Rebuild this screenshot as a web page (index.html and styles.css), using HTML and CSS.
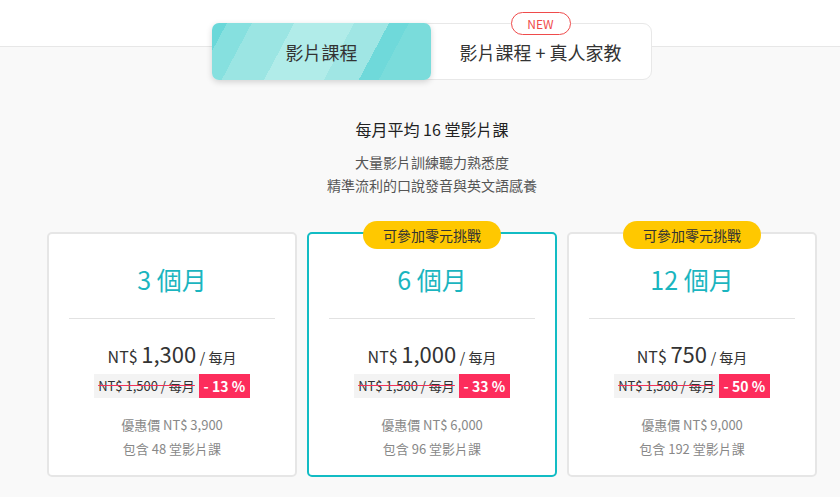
FILE: index.html
```html
<!DOCTYPE html>
<html lang="zh-Hant">
<head>
<meta charset="utf-8">
<link rel="stylesheet" href="styles.css">
</head>
<body>
<div class="page">
  <div class="tabs">
    <div class="tab tab-active">影片課程</div>
    <div class="tab tab-plain">
      <span class="badge-new">NEW</span>
      影片課程 + 真人家教
    </div>
  </div>

  <div class="intro">
    <h2 class="intro-title">每月平均 16 堂影片課</h2>
    <p class="intro-text">大量影片訓練聽力熟悉度<br>精準流利的口說發音與英文語感養</p>
  </div>

  <div class="plans">
    <div class="card">
      <div class="card-title">3 個月</div>
      <div class="divider"></div>
      <div class="price"><span class="cur">NT$</span> <span class="amt">1,300</span> <span class="per">/ 每月</span></div>
      <div class="deal"><span class="old">NT$ 1,500 / 每月</span><span class="off">- 13 %</span></div>
      <div class="info">優惠價 NT$ 3,900</div>
      <div class="info">包含 48 堂影片課</div>
    </div>
    <div class="card card-featured">
      <span class="badge-yellow">可參加零元挑戰</span>
      <div class="card-title">6 個月</div>
      <div class="divider"></div>
      <div class="price"><span class="cur">NT$</span> <span class="amt">1,000</span> <span class="per">/ 每月</span></div>
      <div class="deal"><span class="old">NT$ 1,500 / 每月</span><span class="off">- 33 %</span></div>
      <div class="info">優惠價 NT$ 6,000</div>
      <div class="info">包含 96 堂影片課</div>
    </div>
    <div class="card">
      <span class="badge-yellow">可參加零元挑戰</span>
      <div class="card-title">12 個月</div>
      <div class="divider"></div>
      <div class="price"><span class="cur">NT$</span> <span class="amt">750</span> <span class="per">/ 每月</span></div>
      <div class="deal"><span class="old">NT$ 1,500 / 每月</span><span class="off">- 50 %</span></div>
      <div class="info">優惠價 NT$ 9,000</div>
      <div class="info">包含 192 堂影片課</div>
    </div>
  </div>
</div>
</body>
</html>
```

FILE: styles.css
```css
* { box-sizing: border-box; }
html, body { margin: 0; padding: 0; }
body {
  font-family: "Noto Sans CJK TC", "Noto Sans", sans-serif;
  color: #333;
  background: linear-gradient(#ffffff 0, #ffffff 46px, #e7e7e7 46px, #e7e7e7 47px, #f9f9f9 47px) no-repeat;
  background-color: #f9f9f9;
  min-height: 497px;
}
.page {
  width: 770px;
  margin-left: 47px;
  padding-top: 23px;
}
.tabs {
  width: 440px;
  height: 57px;
  margin: 0 auto;
  display: flex;
  background: #fff;
  border: 1px solid #e8e8e8;
  border-radius: 9px;
}
.tab {
  flex: 1;
  display: flex;
  align-items: center;
  justify-content: center;
  font-size: 18px;
  line-height: 24px;
  color: #333;
  position: relative;
}
.tab-active {
  margin: -1px 0 0 -1px;
  height: 57px;
  border-radius: 7px;
  box-shadow: 0 2px 6px rgba(0, 0, 0, 0.16);
  background: linear-gradient(118deg,
    #6ad8d9 0%, #6ad8d9 6%,
    #86e0df 6%, #86e0df 16%,
    #9be5e3 16%, #9be5e3 33%,
    #b1ece9 33%, #b1ece9 57%,
    #a0e6e4 57%, #a0e6e4 71%,
    #6fd9da 71%, #6fd9da 79%,
    #7adcdb 79%, #7adcdb 100%);
}
.tab-plain { margin-right: 1px; }
.badge-new {
  position: absolute;
  top: -12px;
  left: 50%;
  transform: translateX(-50%);
  width: 60px;
  height: 23px;
  border: 1px solid #ef4b4b;
  border-radius: 12px;
  background: #fff;
  color: #ef4b4b;
  font-size: 12px;
  line-height: 21px;
  text-align: center;
}
.intro {
  text-align: center;
  padding-top: 36px;
}
.intro-title {
  margin: 0;
  font-size: 16px;
  font-weight: 400;
  line-height: 26px;
  color: #222;
}
.intro-text {
  margin: 9px 0 0;
  font-size: 14px;
  line-height: 23px;
  color: #555;
}
.plans {
  display: flex;
  gap: 10px;
  margin-top: 35px;
}
.card {
  position: relative;
  width: 250px;
  height: 245px;
  background: #fff;
  border: 2px solid #e6e6e6;
  border-radius: 5px;
  text-align: center;
  padding-top: 27px;
}
.card-featured { border-color: #12bcc4; }
.badge-yellow {
  position: absolute;
  top: -13px;
  left: 50%;
  transform: translateX(-50%);
  width: 138px;
  height: 28px;
  border-radius: 14px;
  background: #ffc800;
  color: #333;
  font-size: 14px;
  line-height: 28px;
}
.card-title {
  font-size: 25px;
  line-height: 36px;
  color: #1bb5bf;
}
.divider {
  height: 1px;
  background: #e2e2e2;
  margin: 21px 20px 0;
}
.price {
  margin-top: 19px;
  line-height: 30px;
  color: #333;
}
.cur { font-size: 16px; }
.amt { font-size: 22px; font-weight: 400; }
.per { font-size: 14px; }
.deal {
  margin-top: 2px;
  display: flex;
  justify-content: center;
  height: 24px;
}
.old {
  background: #f3f3f3;
  color: #333;
  font-size: 13px;
  line-height: 24px;
  padding: 0 4px;
  text-decoration: line-through;
  text-decoration-color: #f0335b;
}
.off {
  background: #fd2d5c;
  color: #fff;
  font-size: 14px;
  font-weight: 700;
  line-height: 24px;
  width: 51px;
}
.info {
  font-size: 13px;
  line-height: 24px;
  color: #888;
}
.deal + .info { margin-top: 15px; }
```
